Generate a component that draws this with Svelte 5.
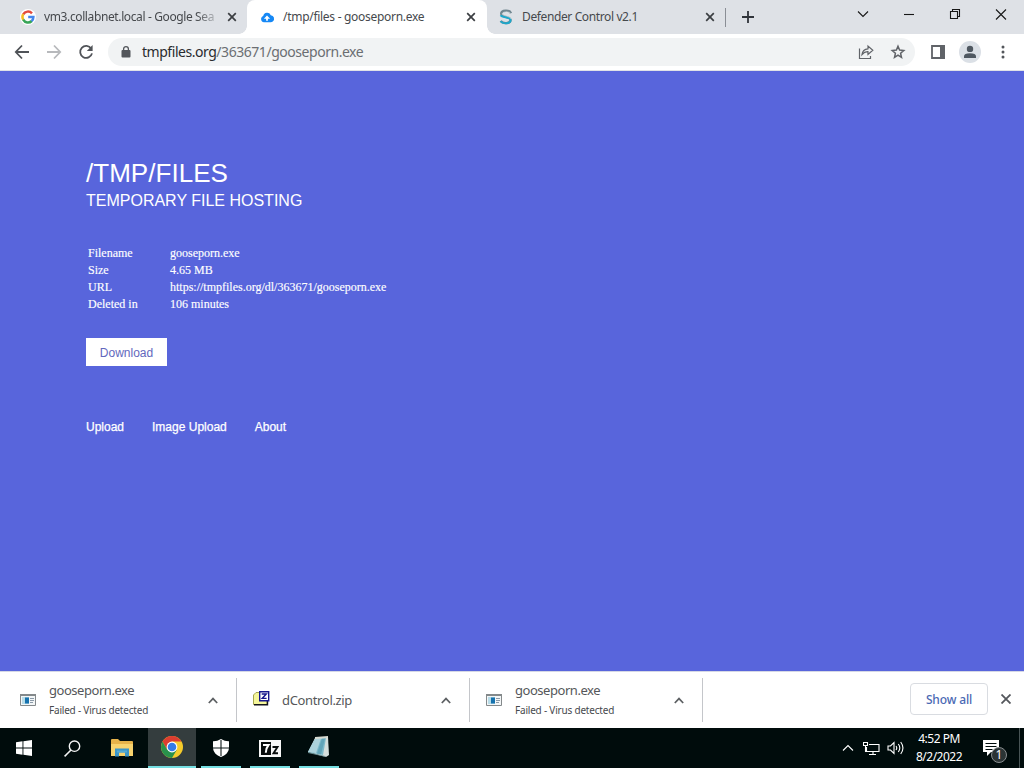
<script>
  const details = [
    ['Filename', 'gooseporn.exe'],
    ['Size', '4.65 MB'],
    ['URL', 'https://tmpfiles.org/dl/363671/gooseporn.exe'],
    ['Deleted in', '106 minutes']
  ];
  const downloads = [
    { name: 'gooseporn.exe', status: 'Failed - Virus detected' },
    { name: 'dControl.zip', status: '' },
    { name: 'gooseporn.exe', status: 'Failed - Virus detected' }
  ];
</script>

{#snippet cross()}
  <svg class="cross" width="10" height="10" viewBox="0 0 10 10"><path d="M1.2 1.2 8.8 8.8M8.8 1.2 1.2 8.8" fill="none" stroke="currentColor" stroke-width="1.7" /></svg>
{/snippet}

<div class="screen">
  <header class="tabs">
    <div class="tab first">
      <svg class="fav" width="16" height="16" viewBox="0 0 16 16">
        <circle cx="8" cy="8" r="8" fill="#fff" />
        <g fill="none" stroke-width="2.5">
          <path d="M3.2 5.4A5.5 5.5 0 0 1 12 4.3" stroke="#e34b3d" />
          <path d="M3.3 10.8A5.5 5.5 0 0 1 3.2 5.2" stroke="#f3bd22" />
          <path d="M11.8 12A5.5 5.5 0 0 1 3.2 10.6" stroke="#37a457" />
          <path d="M8.2 8h5.2A5.5 5.5 0 0 1 11.6 12.1" stroke="#4385ec" />
        </g>
      </svg>
      <span class="title long">vm3.collabnet.local - Google Sea</span>
      {@render cross()}
    </div>
    <div class="tab active">
      <svg class="fav" width="16" height="16" viewBox="0 0 16 16">
        <path d="M5 13.2A3.2 3.2 0 0 1 2.1 10c0-1.4.8-2.5 2.1-3a4 4 0 0 1 7.6-.8 3.5 3.5 0 0 1 2 6.2q-.8.8-2.2.8Z" fill="#1688f5" />
        <path d="M8 6.6 4.9 9.8h2.2v2h1.8v-2h2.2Z" fill="#fff" />
      </svg>
      <span class="title t2">/tmp/files - gooseporn.exe</span>
      {@render cross()}
    </div>
    <div class="tab third">
      <svg class="fav" width="16" height="16" viewBox="0 0 16 16" fill="none">
        <path d="M13 4.2C11.5.6 3.2.9 3.2 4.8c0 3.6 9.3 2.5 9.3 6.2 0 3.9-7.7 4-9.8.9" stroke="#70858f" stroke-width="2.4" />
        <path d="M2.6 6.3C4.2 9 12.3 7.4 12.6 11c0 4-7.7 4.4-10 1.3" stroke="#1ca8cc" stroke-width="1.9" />
        <path d="M12.5 4.3C10.5 2.2 4.4 2.5 4.1 5c.1 1.6 8.2 2.1 9.1 5" stroke="#dce5e8" stroke-width=".6" />
      </svg>
      <span class="title t3">Defender Control v2.1</span>
      {@render cross()}
    </div>
    <svg class="plus" width="12" height="12" viewBox="0 0 12 12"><path d="M6 0v12M0 6h12" stroke="#30343a" stroke-width="1.8" /></svg>
    <div class="controls">
      <svg viewBox="0 0 46 30"><path d="m18 11.5 5 5 5-5" /></svg>
      <svg viewBox="0 0 46 30"><path d="M18 14.5h10" /></svg>
      <svg viewBox="0 0 46 30"><path d="M18.5 11.5h7v7h-7zM20.5 11.5v-2h7v7h-2" /></svg>
      <svg viewBox="0 0 46 30"><path d="m18 9.5 10 10m0-10-10 10" /></svg>
    </div>
  </header>

  <nav class="toolbar">
    <svg class="tool" width="16" height="16" viewBox="0 0 16 16"><path d="M15 8H2M8 1.5 1.8 8 8 14.5" /></svg>
    <svg class="tool faded" width="16" height="16" viewBox="0 0 16 16"><path d="M1 8h13M8 1.5 14.2 8 8 14.5" /></svg>
    <svg class="tool" width="16" height="16" viewBox="0 0 16 16"><path d="M13.2 4.6A6 6 0 1 0 14 9.4" /><path d="M14.6 1v6H8.8Z" class="solid" /></svg>
    <div class="address">
      <svg width="10" height="14" viewBox="0 0 10 14"><rect x=".5" y="5" width="9" height="7.5" rx="1" fill="#53565b" /><path d="M2.6 5.5V4a2.4 2.4 0 0 1 4.8 0v1.5" fill="none" stroke="#53565b" stroke-width="1.3" /></svg>
      <span class="url"><b>tmpfiles.org</b>/363671/gooseporn.exe</span>
      <svg class="share" width="16" height="16" viewBox="0 0 16 16"><path d="M1.5 4.5v10h11V12M4 10.5C4.4 7 6.5 5 10 4.8V2l4.8 4.2L10 10.4V7.7C7.5 7.5 5.7 8.5 4 10.5Z" /></svg>
      <svg class="star" width="16" height="16" viewBox="0 0 16 16"><path d="m8 2.3 1.6 3.8 4.2.4-3.2 2.8.9 4.1L8 11.2l-3.5 2.2.9-4.1-3.2-2.8 4.2-.4Z" /></svg>
    </div>
    <svg class="panel" width="14" height="14" viewBox="0 0 14 14"><path d="M1 1h12v12H1Z" fill="none" stroke="#606368" stroke-width="1.8" /><path d="M9 0h5v14H9Z" fill="#606368" /></svg>
    <svg class="avatar" width="22" height="22" viewBox="0 0 22 22"><circle cx="11" cy="11" r="11" fill="#dbe0e6" /><circle cx="11" cy="7.9" r="3.2" fill="#4f5861" /><path d="M5 17V15.2q0-3 6-3t6 3V17Z" fill="#4f5861" /></svg>
    <svg class="dots" width="4" height="14" viewBox="0 0 4 14" fill="#53565b"><circle cx="2" cy="2" r="1.5" /><circle cx="2" cy="7" r="1.5" /><circle cx="2" cy="12" r="1.5" /></svg>
  </nav>

  <main>
    <h1>/TMP/FILES</h1>
    <h2>TEMPORARY FILE HOSTING</h2>
    <dl>
      {#each details as [label, value]}
        <dt>{label}</dt><dd>{value}</dd>
      {/each}
    </dl>
    <button>Download</button>
    <div class="links"><span>Upload</span><span>Image Upload</span><span>About</span></div>
  </main>

  <section class="shelf">
    {#each downloads as item}
      <div class="item" class:zip={!item.status}>
        {#if item.status}
          <svg class="file" width="16" height="16" viewBox="0 0 16 16"><path d="M.5 2.5h15v11H.5Z" fill="#f3f6f7" stroke="#84898b" /><path d="M0 2h16v2H0Z" fill="#84898b" /><path d="M2 5h7v7H2Z" fill="#b8dce8" /><path d="M5 5.5h4v6H5Z" fill="#1672ae" /><path d="M10 6.5h4M10 8.5h4M10 10.5h3" stroke="#8b9aa8" /></svg>
        {:else}
          <svg class="file raised" width="17" height="16" viewBox="0 0 17 16"><path d="M.5 13.5V4L3 1.5h3L7.5 3H14v10.5Z" fill="#f5f69a" stroke="#a5a54e" /><path d="M1 13.7h13.5V9" fill="none" stroke="#15151a" stroke-width="1.4" /><path d="M6.7.7h9v9h-9Z" fill="#fff" stroke="#16168c" stroke-width="1.4" /><path d="M8.7 3h4.6L9.2 7.4h4.4" fill="none" stroke="#16168c" stroke-width="1.4" /></svg>
        {/if}
        <div class="label"><div class="name">{item.name}</div>{#if item.status}<div class="status">{item.status}</div>{/if}</div>
        <svg class="up" width="10" height="7" viewBox="0 0 10 7"><path d="m.8 6 4.2-4.4L9.2 6" /></svg>
      </div>
    {/each}
    <button class="all">Show all</button>
    <svg class="dismiss" width="10" height="10" viewBox="0 0 10 10"><path d="m.5.5 9 9m0-9-9 9" stroke="#54575c" stroke-width="1.8" /></svg>
  </section>

  <footer>
    <div class="app"><svg width="16" height="16" viewBox="0 0 16 16"><path d="M0 2.2 6.5 1.3v6.2H0ZM7.4 1.2 16 0v7.5H7.4ZM0 8.5h6.5v6.2L0 13.8ZM7.4 8.5H16V16l-8.6-1.2Z" fill="#fff" /></svg></div>
    <div class="app"><svg width="17" height="17" viewBox="0 0 17 17"><circle cx="10.5" cy="6.2" r="5.2" fill="none" stroke="#f4f5f5" stroke-width="1.4" /><path d="m7 10-6.4 6.4" stroke="#f4f5f5" stroke-width="1.5" /></svg></div>
    <div class="app pinned"><svg width="22" height="20" viewBox="0 0 22 20"><path d="M0 2q0-1 1-1h6l2 2h12q1 0 1 1v14H0Z" fill="#e7b34a" /><path d="M0 6h22v12H0Z" fill="#f8d36e" /><path d="M4 10.5h14v8h-4v-4H8v4H4Z" fill="#3c96c8" /><path d="M6 12.5h10v2H6Z" fill="#55abd4" /></svg></div>
    <div class="app current"><svg width="22" height="22" viewBox="0 0 22 22"><circle cx="11" cy="11" r="11" fill="#f6cb2b" /><path d="M1.5 5.5A11 11 0 0 1 20.5 5.5H11L6.2 13.8Z" fill="#dc3d31" /><path d="M1.5 5.5A11 11 0 0 0 11 22l4.8-8.3L6.2 13.8Z" fill="#29914c" /><circle cx="11" cy="11" r="5.4" fill="#fff" /><circle cx="11" cy="11" r="4.3" fill="#347be7" /></svg></div>
    <div class="app open"><svg width="18" height="18" viewBox="0 0 18 18"><path d="M9 0q4 2.5 8 2.3V8c0 5.5-3.5 8.2-8 10-4.5-1.8-8-4.5-8-10V2.3Q5 2.5 9 0Z" fill="#fff" /><path d="M9 1v16M1 9h16" stroke="#111c1c" stroke-width="1.1" /></svg></div>
    <div class="app open"><svg width="22" height="17" viewBox="0 0 22 17"><path d="M0 0h22v17H0Z" fill="#f7f7f7" /><path d="M2 2h10v13H2Z" fill="#080c0c" /><path d="M4 5h5.5Q7 8 6.8 12.7" fill="none" stroke="#fff" stroke-width="2" /><path d="M13.5 7h5l-4 6.3h4.5" fill="none" stroke="#080c0c" stroke-width="1.9" /></svg></div>
    <div class="app open"><svg class="notepad" width="24" height="22" viewBox="0 0 24 22"><path d="m8 2 13-1 1 18-3 2L1 16Z" fill="#d5dfdd" /><path d="m8 3 11-1-3 17L1 16Z" fill="#7dbaca" /><path d="m8 3 6-.5L9 17l-8-1Z" fill="#add3dc" /><path d="m15 2.5-5 15 4 .9 4-16Z" fill="#62a5b9" /><path d="m8 1 13-1v2L8 3Z" fill="#d7dbd2" /><path d="m1 16 17 4 1 1L1 17Z" fill="#678d93" /></svg></div>
    <div class="tray">
      <svg width="12" height="8" viewBox="0 0 12 8"><path d="m1 6.5 5-5 5 5" /></svg>
      <svg width="17" height="15" viewBox="0 0 17 15"><path d="M6 3.5h10v7H3.5V6M.5 1.5h4v3h-4zM2.5 4.5v6H5M10 11v3M6 13.5h7" /></svg>
      <svg width="17" height="14" viewBox="0 0 17 14"><path d="M1 5h2.5L7 1.5v11L3.5 9H1ZM9 5q1.5 2 0 4M11.3 3q3 4 0 8M13.7 1q4.5 6 0 12" /></svg>
      <div class="clock"><div>4:52 PM</div><div>8/2/2022</div></div>
      <div class="notice"><svg width="16" height="16" viewBox="0 0 16 16"><path d="M0 0h16v12H8l-4 4v-4H0Z" class="paper" /><path d="M2.5 3.5h11M2.5 6.5h11M2.5 9.5h7" stroke="#000c0c" /></svg><span>1</span></div>
      <i></i>
    </div>
  </footer>
</div>

<style>
  :global(body) { margin: 0; overflow: hidden; }
  .screen { width: 1024px; height: 768px; display: flex; flex-direction: column; font-family: "Noto Sans", "Open Sans", sans-serif; color: #46494d; overflow: hidden; }
  svg { display: block; flex: none; }
  .tabs { height: 34px; flex: none; display: flex; align-items: center; background: #dee1e6; }
  .tab { box-sizing: border-box; height: 34px; display: flex; align-items: center; position: relative; font-size: 12px; }
  .first { width: 247px; padding-left: 20px; }
  .tab.active { width: 240px; background: #fff; border-radius: 8px 8px 0 0; padding-left: 12px; }
  .active::before, .active::after { content: ""; position: absolute; bottom: 0; width: 8px; height: 8px; }
  .active::before { left: -8px; background: radial-gradient(circle at 0 0, transparent 7.5px, #fff 8px); }
  .active::after { right: -8px; background: radial-gradient(circle at 100% 0, transparent 7.5px, #fff 8px); }
  .third { width: 239px; padding-left: 11px; }
  .third::after { content: ""; position: absolute; right: 0; top: 8px; width: 1px; height: 19px; background: #8a8e95; }
  .title { margin-left: 8px; width: 173px; white-space: nowrap; line-height: 20px; }
  .long { mask-image: linear-gradient(90deg, #000 88%, #0003); letter-spacing: -.38px; }
  .t2 { letter-spacing: -.29px; width: 179px; }
  .t3 { letter-spacing: -.38px; width: 175px; }
  .cross { margin-left: 10px; color: #3b3e42; }
  .active .cross { margin-left: 4px; }
  .third .cross { margin-left: 8px; }
  .plus { margin-left: 16px; }
  .controls { margin-left: auto; align-self: flex-start; display: flex; }
  .controls svg { width: 46px; height: 30px; fill: none; stroke: #171717; stroke-width: 1.1; }
  .toolbar { box-sizing: border-box; height: 37px; flex: none; display: flex; align-items: center; background: #fff; border-bottom: 1px solid #e0e2e7; padding-left: 14px; }
  .tool { margin-right: 16px; fill: none; stroke: #505358; stroke-width: 1.8; }
  .solid { fill: #505358; stroke: none; }
  .faded { stroke: #b7b9bc; }
  .address { width: 807px; height: 28px; margin-left: -2px; border-radius: 14px; background: #f1f3f4; display: flex; align-items: center; padding-left: 13px; box-sizing: border-box; }
  .url { margin-left: 11px; width: 716px; color: #6b6e72; font-size: 14px; letter-spacing: -.46px; line-height: 20px; }
  b { font-weight: 400; color: #292b2e; }
  .share, .star { fill: none; stroke: #606368; stroke-width: 1.2; }
  .star { margin-left: 16px; stroke-width: 1.5; }
  .panel { margin-left: 16px; }
  .avatar { margin-left: 14px; }
  .dots { margin-left: 20px; }
  main { box-sizing: border-box; height: 600px; flex: none; background: #5865dc; color: #fff; padding: 86px 0 0 86px; }
  h1, h2 { font-family: "Liberation Sans", Arial, sans-serif; font-weight: 400; margin: 0; white-space: nowrap; }
  h1 { font-size: 26px; line-height: 32px; letter-spacing: .03px; }
  h2 { font-size: 16px; line-height: 24px; }
  dl { margin: 32px 0 0 2px; display: grid; grid-template-columns: 82px auto; grid-auto-rows: 17px; font: 12px/17px "Liberation Serif", "Times New Roman", serif; -webkit-text-stroke: .15px #fff; }
  dd { margin: 0; }
  main button { width: 81px; height: 28px; display: block; margin-top: 25px; border: 0; padding: 2px 0 0; background: #fff; color: #6268bd; font: 12px "Liberation Sans", sans-serif; }
  .links { display: flex; gap: 28px; margin-top: 52px; font: 12px/18px "Liberation Sans", sans-serif; -webkit-text-stroke: .25px #fff; }
  .shelf { box-sizing: border-box; height: 57px; flex: none; border-top: 1px solid #d5d8e5; background: #fff; display: flex; align-items: center; }
  .item { box-sizing: border-box; width: 233px; height: 44px; border-right: 1px solid #c4c6ca; display: flex; align-items: center; padding: 0 18px 0 16px; }
  .item:first-child { width: 237px; padding-left: 20px; }
  .raised { margin-bottom: 3px; }
  .label { margin-left: 13px; flex: 1; white-space: nowrap; }
  .zip .label { margin-left: 12px; }
  .name { font-size: 13px; line-height: 20px; letter-spacing: -.46px; color: #55575a; }
  .zip .name { letter-spacing: -.34px; }
  .status { font-size: 10px; line-height: 20px; letter-spacing: -.2px; }
  .up { fill: none; stroke: #5d6063; stroke-width: 1.7; }
  .all { margin-left: auto; box-sizing: border-box; width: 78px; height: 32px; margin-bottom: 2px; padding: 0; border: 1px solid #d9dce1; border-radius: 4px; background: #fff; color: #4a69b4; font: 500 12px "Noto Sans", sans-serif; letter-spacing: -.15px; }
  .dismiss { margin: 0 13px 2px; }
  footer { height: 40px; flex: none; display: flex; background: #000c0c; color: #fff; }
  .app { box-sizing: border-box; width: 48px; height: 40px; display: flex; align-items: center; justify-content: center; }
  .pinned { width: 52px; }
  .current { background: #343d3e; border-bottom: 2px solid #75dfe2; }
  .open { width: 40px; margin-left: 5px; border-bottom: 2px solid #75dfe2; }
  .open svg { margin-top: 2px; }
  .open .notepad { margin-top: 0; }
  .open + .open { margin-left: 9px; }
  .tray { margin-left: auto; display: flex; align-items: center; }
  .tray svg { fill: none; stroke: #fff; stroke-width: 1.1; margin-right: 9px; }
  .tray svg:nth-child(2) { margin-right: 7px; }
  .clock { width: 50px; margin-left: 1px; text-align: center; font-size: 12px; line-height: 18px; letter-spacing: -.5px; white-space: nowrap; }
  .notice { position: relative; margin: 4px 0 0 19px; width: 24px; height: 20px; }
  .tray .paper { fill: #fff; stroke: none; }
  .notice span { position: absolute; left: 8px; top: 7px; box-sizing: border-box; width: 16px; height: 16px; border: 1px solid #898e90; border-radius: 50%; background: #2b3435; text-align: center; font-size: 12px; line-height: 14px; }
  .tray i { width: 1px; height: 40px; background: #485455; margin: 0 4px 0 12px; }
</style>
